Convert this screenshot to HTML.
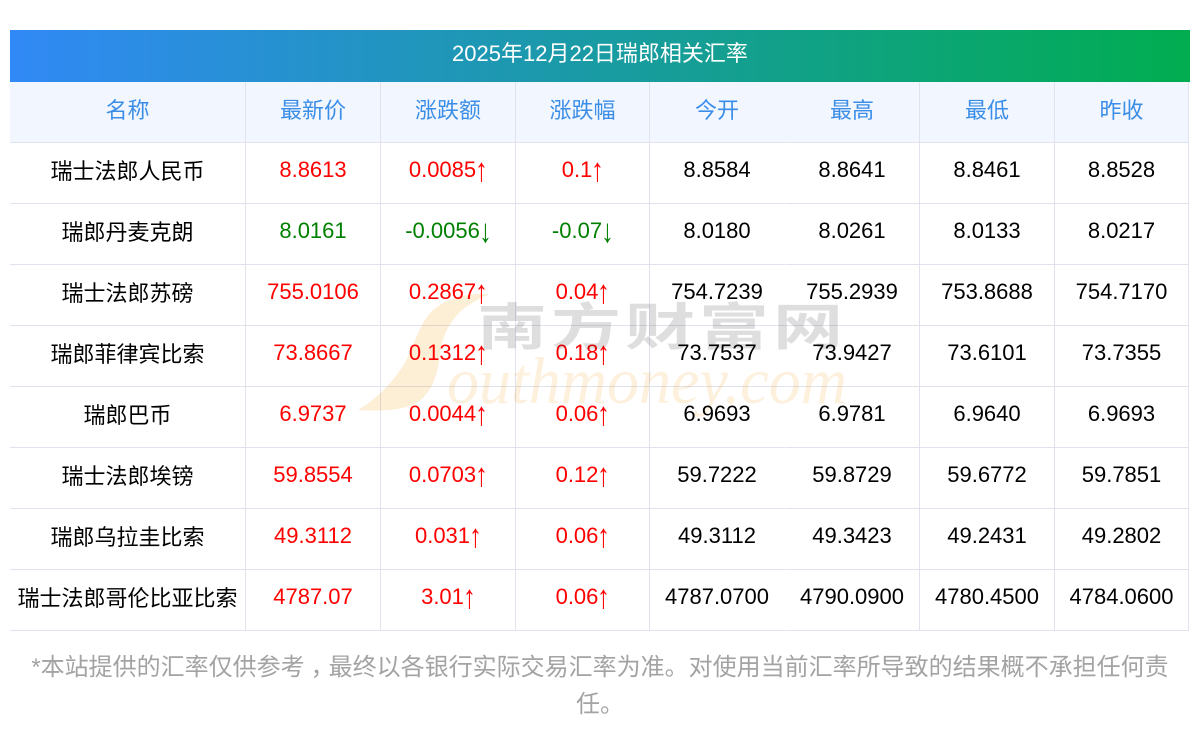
<!DOCTYPE html>
<html lang="zh">
<head>
<meta charset="utf-8">
<style>
html,body{margin:0;padding:0;background:#fff;width:1200px;height:733px;overflow:hidden}
body{font-family:"Liberation Sans","WenQuanYi Zen Hei",sans-serif;position:relative}
.title{position:absolute;left:10px;top:30px;width:1180px;height:52px;line-height:47px;text-align:center;color:#fff;font-size:22px;background:linear-gradient(90deg,#3189f6,#01ad50)}
table{position:absolute;left:10px;top:82px;width:1179px;table-layout:fixed;border-collapse:separate;border-spacing:0;z-index:2}
th,td{padding:0 0 6px;height:54px;text-align:center;font-size:22px;font-weight:normal;border-bottom:1px solid #e0e3ee;border-right:1px solid #e0e3ee;box-sizing:content-box;color:#000;white-space:nowrap}
th{background:#f2f6fe;color:#3b8ee8}
th.n,td.n{border-right-color:transparent}
.r{color:#f00}.g{color:#008000}
.u,.d{display:inline-block;transform:translateY(-2px) scale(1.15,1.5);transform-origin:50% 30%}
svg.wm{position:absolute;left:0;top:0;z-index:3;pointer-events:none}
.foot{position:absolute;left:10px;top:649px;width:1180px;text-align:center;font-size:24px;line-height:37px;color:#a3a3a3}
.c{position:relative;left:6px}
</style>
</head>
<body>
<div class="title">2025年12月22日瑞郎相关汇率</div>
<table>
<colgroup><col style="width:236px"><col style="width:135px"><col style="width:135px"><col style="width:134px"><col style="width:135px"><col style="width:135px"><col style="width:135px"><col style="width:134px"></colgroup>
<tr><th>名称</th><th>最新价</th><th>涨跌额</th><th>涨跌幅</th><th class="n">今开</th><th>最高</th><th>最低</th><th>昨收</th></tr>
<tr><td>瑞士法郎人民币</td><td class="r">8.8613</td><td class="r">0.0085<span class="u">↑</span></td><td class="r">0.1<span class="u">↑</span></td><td class="n">8.8584</td><td>8.8641</td><td>8.8461</td><td>8.8528</td></tr>
<tr><td>瑞郎丹麦克朗</td><td class="g">8.0161</td><td class="g">-0.0056<span class="d">↓</span></td><td class="g">-0.07<span class="d">↓</span></td><td class="n">8.0180</td><td>8.0261</td><td>8.0133</td><td>8.0217</td></tr>
<tr><td>瑞士法郎苏磅</td><td class="r">755.0106</td><td class="r">0.2867<span class="u">↑</span></td><td class="r">0.04<span class="u">↑</span></td><td class="n">754.7239</td><td>755.2939</td><td>753.8688</td><td>754.7170</td></tr>
<tr><td>瑞郎菲律宾比索</td><td class="r">73.8667</td><td class="r">0.1312<span class="u">↑</span></td><td class="r">0.18<span class="u">↑</span></td><td class="n">73.7537</td><td>73.9427</td><td>73.6101</td><td>73.7355</td></tr>
<tr><td>瑞郎巴币</td><td class="r">6.9737</td><td class="r">0.0044<span class="u">↑</span></td><td class="r">0.06<span class="u">↑</span></td><td class="n">6.9693</td><td>6.9781</td><td>6.9640</td><td>6.9693</td></tr>
<tr><td>瑞士法郎埃镑</td><td class="r">59.8554</td><td class="r">0.0703<span class="u">↑</span></td><td class="r">0.12<span class="u">↑</span></td><td class="n">59.7222</td><td>59.8729</td><td>59.6772</td><td>59.7851</td></tr>
<tr><td>瑞郎乌拉圭比索</td><td class="r">49.3112</td><td class="r">0.031<span class="u">↑</span></td><td class="r">0.06<span class="u">↑</span></td><td class="n">49.3112</td><td>49.3423</td><td>49.2431</td><td>49.2802</td></tr>
<tr><td>瑞士法郎哥伦比亚比索</td><td class="r">4787.07</td><td class="r">3.01<span class="u">↑</span></td><td class="r">0.06<span class="u">↑</span></td><td class="n">4787.0700</td><td>4790.0900</td><td>4780.4500</td><td>4784.0600</td></tr>
</table>
<svg class="wm" width="1200" height="733" viewBox="0 0 1200 733" style="mix-blend-mode:multiply">
<path d="M490 294C468 293 446 298 432 311C420 323 416 340 410 352C402 372 384 394 358 410C380 411 402 411 416 403C432 394 438 374 440 354C442 336 450 322 460 312C470 303 480 298 490 294Z" fill="#fdeed6"/>
<text transform="translate(447 403) scale(.97 1)" font-family="Liberation Serif" font-style="italic" font-size="66" fill="#fdf0dc">outhmoney.com</text>
<text transform="translate(477 345) scale(1 .72)" font-family="Noto Sans CJK SC" font-weight="700" font-size="70" letter-spacing="4" fill="#dedede">南方财富网</text>
</svg>
<div class="foot">*本站提供的汇率仅供参考<span class="c">，</span>最终以各银行实际交易汇率为准。对使用当前汇率所导致的结果概不承担任何责任。</div>
</body>
</html>
